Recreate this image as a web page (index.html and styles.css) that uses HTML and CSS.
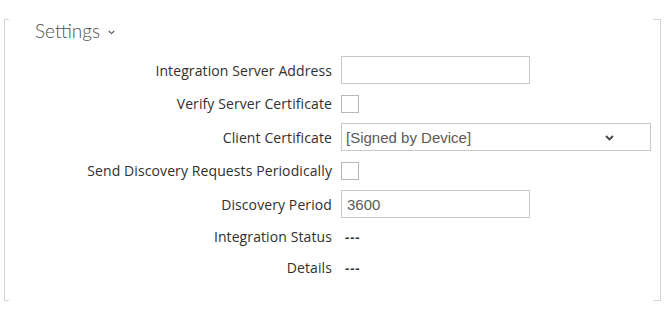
FILE: index.html
```html
<!DOCTYPE html>
<html lang="en">
<head>
  <meta charset="UTF-8">
  <meta name="viewport" content="width=device-width, initial-scale=1.0">
  <link rel="stylesheet" href="styles.css">
  <title>Settings</title>
</head>
<body>

<div class="settings">
  <div class="settings-head">
    <span class="settings-title">Settings</span>
    <svg class="head-chevron" width="7" height="5" viewBox="0 0 7 5">
      <path d="M0.8 1 L3.5 3.6 L6.2 1" fill="none" stroke="#555" stroke-width="1.1"/>
    </svg>
  </div>

  <div class="form">
    <label class="lbl" for="serverAddress">Integration Server Address</label>
    <div class="ctl"><input type="text" id="serverAddress" class="txt"></div>

    <label class="lbl" for="verifyCert">Verify Server Certificate</label>
    <div class="ctl"><input type="checkbox" id="verifyCert" class="chk"></div>

    <label class="lbl" for="clientCert">Client Certificate</label>
    <div class="ctl">
      <div class="select-wrap">
        <select id="clientCert" class="sel">
          <option>[Signed by Device]</option>
        </select>
        <svg class="sel-arrow" width="9" height="6" viewBox="0 0 9 6">
          <path d="M1 1 L4.5 4.5 L8 1" fill="none" stroke="#444" stroke-width="1.8"/>
        </svg>
      </div>
    </div>

    <label class="lbl" for="sendDiscovery">Send Discovery Requests Periodically</label>
    <div class="ctl"><input type="checkbox" id="sendDiscovery" class="chk"></div>

    <label class="lbl" for="discoveryPeriod">Discovery Period</label>
    <div class="ctl"><input type="text" id="discoveryPeriod" class="txt" value="3600"></div>

    <span class="lbl lbl-text">Integration Status</span>
    <span class="val">---</span>

    <span class="lbl lbl-text lbl-last">Details</span>
    <span class="val lbl-last">---</span>
  </div>
</div>

</body>
</html>
```

FILE: styles.css
```css
body {
  margin: 0;
  font-family: 'Open Sans', 'Noto Sans', sans-serif;
  background-color: #fff;
  color: #333;
}

.settings {
  margin: 31px 10px 0 4px;
  padding: 0 0 24px 0;
  border-left: 1px solid #d4d4d4;
  border-right: 1px solid #d4d4d4;
  background:
    linear-gradient(#d4d4d4, #d4d4d4) left top / 4px 1px no-repeat,
    linear-gradient(#d4d4d4, #d4d4d4) right top / 7px 1px no-repeat,
    linear-gradient(#d4d4d4, #d4d4d4) left bottom / 4px 1px no-repeat,
    linear-gradient(#d4d4d4, #d4d4d4) right bottom / 6px 1px no-repeat;
}

.settings-head {
  margin-top: -12px;
  padding-left: 30px;
  height: 24px;
  display: flex;
  align-items: center;
  gap: 8px;
}

.settings-title {
  font-family: 'Lato', sans-serif;
  font-size: 19px;
  font-weight: 300;
  line-height: 24px;
  color: #505050;
}

.head-chevron {
  margin-top: 2px;
}

.form {
  margin-top: 13px;
  display: grid;
  grid-template-columns: 327px 1fr;
  column-gap: 9px;
  row-gap: 10px;
  align-items: center;
}

.lbl {
  text-align: right;
  font-size: 14px;
  letter-spacing: 0.1px;
  color: #303030;
  white-space: nowrap;
}

.lbl-text {
  line-height: 18px;
}

.val {
  font-size: 13px;
  font-weight: bold;
  letter-spacing: 1px;
  color: #333;
  padding-left: 4px;
  line-height: 18px;
}

.lbl-last {
  margin-top: 3px;
}

.ctl {
  display: flex;
}

.txt {
  box-sizing: border-box;
  width: 189px;
  height: 28px;
  margin: 0;
  padding: 2px 5px;
  border: 1px solid #c8c8c8;
  border-radius: 0;
  font-family: 'Liberation Sans', Arial, sans-serif;
  font-size: 15px;
  color: #5a5a5a;
  outline: none;
}

.chk {
  -webkit-appearance: none;
  appearance: none;
  box-sizing: border-box;
  width: 18px;
  height: 18px;
  margin: 0;
  border: 1px solid #b8b8b8;
  background-color: #fff;
}

.select-wrap {
  position: relative;
  width: 310px;
}

.sel {
  -webkit-appearance: none;
  appearance: none;
  box-sizing: border-box;
  width: 100%;
  height: 28px;
  margin: 0;
  padding: 0 24px 0 4px;
  border: 1px solid #c8c8c8;
  border-radius: 0;
  background-color: #fff;
  font-family: 'Liberation Sans', Arial, sans-serif;
  font-size: 15px;
  color: #5a5a5a;
}

.sel-arrow {
  position: absolute;
  right: 37px;
  top: 12px;
  pointer-events: none;
}
```
